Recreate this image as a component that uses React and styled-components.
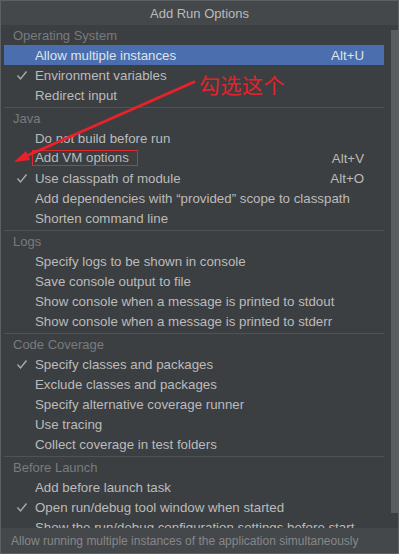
import React from "react";
import styled, { createGlobalStyle, css } from "styled-components";

const GlobalStyle = createGlobalStyle`
  html, body {
    margin: 0;
    padding: 0;
    background: #3c3f41;
  }
  * { box-sizing: border-box; }
`;

const sections = [
  {
    title: "Operating System",
    items: [
      { label: "Allow multiple instances", key: "Alt+U", selected: true },
      { label: "Environment variables", checked: true },
      { label: "Redirect input" },
    ],
  },
  {
    title: "Java",
    items: [
      { label: "Do not build before run" },
      { label: "Add VM options", key: "Alt+V", boxed: true },
      { label: "Use classpath of module", key: "Alt+O", checked: true },
      { label: "Add dependencies with \u201cprovided\u201d scope to classpath" },
      { label: "Shorten command line" },
    ],
  },
  {
    title: "Logs",
    items: [
      { label: "Specify logs to be shown in console" },
      { label: "Save console output to file" },
      { label: "Show console when a message is printed to stdout" },
      { label: "Show console when a message is printed to stderr" },
    ],
  },
  {
    title: "Code Coverage",
    items: [
      { label: "Specify classes and packages", checked: true },
      { label: "Exclude classes and packages" },
      { label: "Specify alternative coverage runner" },
      { label: "Use tracing" },
      { label: "Collect coverage in test folders" },
    ],
  },
  {
    title: "Before Launch",
    items: [
      { label: "Add before launch task" },
      { label: "Open run/debug tool window when started", checked: true },
      { label: "Show the run/debug configuration settings before start" },
    ],
  },
];

function CheckIcon() {
  return (
    <svg width="12" height="11" viewBox="0 0 12 11">
      <polyline points="1.5,5.5 4.5,9 10.5,1.5" fill="none" stroke="#a9abad" strokeWidth="1.4" />
    </svg>
  );
}

export default function App() {
  return (
    <>
      <GlobalStyle />
      <Dialog>
        <TitleBar>Add Run Options</TitleBar>
        <Body>
          <List>
            {sections.map((section, i) => (
              <Section key={section.title} $first={i === 0}>
                <SectionTitle>{section.title}</SectionTitle>
                {section.items.map((item) => (
                  <Row key={item.label} $selected={item.selected}>
                    <CheckCell>{item.checked && <CheckIcon />}</CheckCell>
                    <Label $boxed={item.boxed}>{item.label}</Label>
                    {item.key && <Shortcut>{item.key}</Shortcut>}
                  </Row>
                ))}
              </Section>
            ))}
          </List>
          <ScrollTrack>
            <ScrollThumb />
          </ScrollTrack>
        </Body>
        <Footer>Allow running multiple instances of the application simultaneously</Footer>

        <Annotation>
          <svg width="399" height="554" viewBox="0 0 399 554">
            <line x1="194" y1="82" x2="24" y2="157" stroke="#e8212b" strokeWidth="3" strokeLinecap="round" />
            <polygon points="14,162 26,151 30,160" fill="#e8212b" />
          </svg>
          <Note>勾选这个</Note>
        </Annotation>
      </Dialog>
    </>
  );
}

const Dialog = styled.div`
  position: relative;
  width: 399px;
  height: 554px;
  border: 1px solid #5d6063;
  display: flex;
  flex-direction: column;
  background: #3c3f41;
  font-family: "Liberation Sans", Arial, sans-serif;
  overflow: hidden;
`;

const TitleBar = styled.div`
  height: 24px;
  flex: none;
  display: flex;
  align-items: center;
  justify-content: center;
  background: #45484a;
  color: #bbbbbb;
  font-size: 13px;
`;

const Body = styled.div`
  flex: 1;
  display: flex;
  overflow: hidden;
  background: #3c3f41;
`;

const List = styled.div`
  flex: 1;
  padding-left: 3px;
`;

const Section = styled.div`
  margin-top: ${(p) => (p.$first ? "0" : "2px")};
  border-top: ${(p) => (p.$first ? "none" : "1px solid #505356")};
  margin-right: ${(p) => (p.$first ? "0" : "3px")};
`;

const SectionTitle = styled.div`
  height: 20px;
  display: flex;
  align-items: center;
  padding-left: 9px;
  color: #787b7e;
  font-size: 13px;
`;

const Row = styled.div`
  height: 20px;
  display: flex;
  align-items: center;
  width: 380px;
  background: ${(p) => (p.$selected ? "#4b6eaf" : "transparent")};
  color: ${(p) => (p.$selected ? "#dfe3ea" : "#bbbbbb")};
  font-size: 13.3px;
  padding-right: 20px;
`;

const CheckCell = styled.div`
  width: 31px;
  flex: none;
  display: flex;
  align-items: center;
  padding-left: 12px;
`;

const Label = styled.span`
  flex: 1;
  white-space: nowrap;
  ${(p) =>
    p.$boxed &&
    css`
      flex: none;
      border: 1px solid #e2262d;
      padding: 0 8px 0 2px;
      margin-left: -3px;
      margin-right: auto;
      line-height: 14px;
    `}
`;

const Shortcut = styled.span`
  flex: none;
  white-space: nowrap;
`;

const ScrollTrack = styled.div`
  width: 13px;
  flex: none;
  padding: 5px 1px 0 4px;
`;

const ScrollThumb = styled.div`
  height: 483px;
  background: #5a5d60;
`;

const Footer = styled.div`
  height: 25px;
  flex: none;
  display: flex;
  align-items: center;
  padding-left: 10px;
  background: #45484a;
  color: #858789;
  font-size: 12px;
  white-space: nowrap;
`;

const Annotation = styled.div`
  position: absolute;
  left: -1px;
  top: -1px;
  width: 399px;
  height: 554px;
  pointer-events: none;
  svg {
    position: absolute;
    left: 0;
    top: 0;
  }
`;

const Note = styled.div`
  position: absolute;
  left: 199px;
  top: 69px;
  color: #e5222b;
  font-size: 21px;
  font-family: "Noto Sans CJK SC", sans-serif;
  letter-spacing: 0.5px;
`;
